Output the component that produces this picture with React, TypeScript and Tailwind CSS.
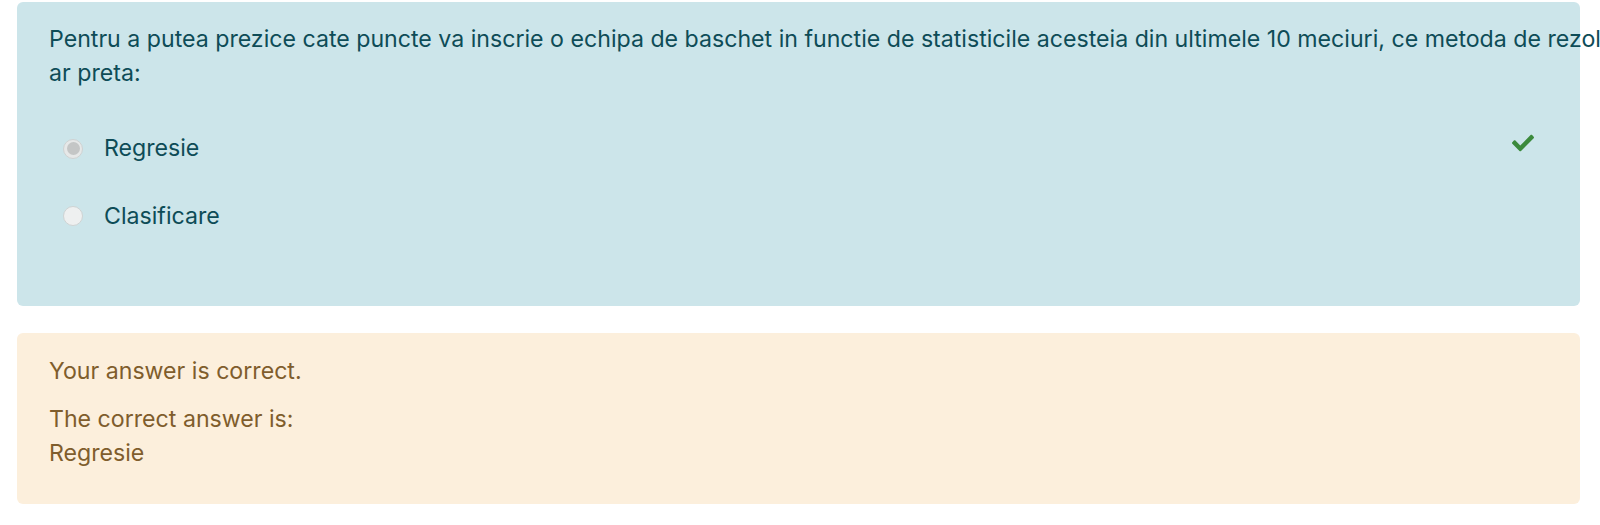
import { FaCheck } from "react-icons/fa";

const Radio = ({ checked }: { checked?: boolean }) => {
  if (checked) {
    return (
      <span className="flex h-[20px] w-[20px] shrink-0 items-center justify-center rounded-full border border-[#cfd2d2] bg-[#e6e8e8]">
        <span className="h-[13px] w-[13px] rounded-full bg-[#c4c6c6]" />
      </span>
    );
  }
  return (
    <span className="h-[20px] w-[20px] shrink-0 rounded-full border border-[#cfd3d3] bg-[#eef0f0]" />
  );
};

const AnswerRow = ({
  label,
  checked,
  correct,
}: {
  label: string;
  checked?: boolean;
  correct?: boolean;
}) => (
  <div className="flex items-center">
    <span className="ml-[14px] mr-[21px] flex">
      <Radio checked={checked} />
    </span>
    <span>{label}</span>
    {correct && (
      <FaCheck className="mb-[12px] ml-auto mr-[46px] h-[22px] w-[22px] text-[#3b8a3c]" />
    )}
  </div>
);

const App = () => {
  return (
    <div className="h-[525px] overflow-hidden bg-white font-['Inter','Liberation_Sans',sans-serif] text-[23.15px] leading-[33.75px]">
      <div className="ml-[17px] mr-[20px] pt-[2px]">
        <div className="h-[304px] rounded-[6px] bg-[#cce5ea] pl-[32px] pt-[21px] text-[#0e4c57]">
          <p>
            <span className="whitespace-nowrap">
              Pentru a putea prezice cate puncte va inscrie o echipa de
              baschet in functie de statisticile acesteia din ultimele 10
              meciuri, ce metoda de rezolvare s-
            </span>
            <br />
            ar preta:
          </p>
          <div className="mt-[41px] flex flex-col gap-[34px]">
            <AnswerRow label="Regresie" checked correct />
            <AnswerRow label="Clasificare" />
          </div>
        </div>

        <div className="mt-[27px] h-[171px] rounded-[6px] bg-[#fcefdc] pl-[32px] pt-[22px] text-[#7f5d2c]">
          <p>Your answer is correct.</p>
          <div className="mt-[14px]">
            <p>The correct answer is:</p>
            <p>Regresie</p>
          </div>
        </div>
      </div>
    </div>
  );
};

export default App;
